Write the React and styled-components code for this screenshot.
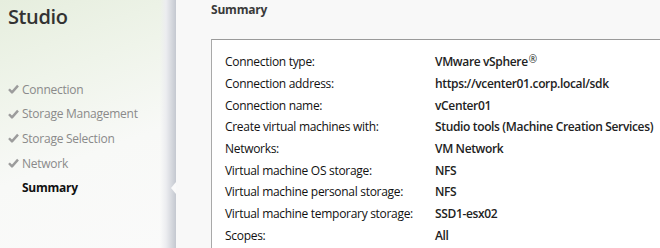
import React from "react";
import styled, { createGlobalStyle } from "styled-components";

const Global = createGlobalStyle`
  html, body { margin: 0; padding: 0; }
  body {
    width: 660px; height: 248px; overflow: hidden;
    font-family: "Open Sans", "Noto Sans", sans-serif;
  }
`;

const Page = styled.div`
  display: flex;
  width: 660px;
  height: 248px;
  overflow: hidden;
`;

const Sidebar = styled.aside`
  position: relative;
  width: 176px;
  flex: none;
  background:
    linear-gradient(90deg, rgba(255,255,255,0) 0, rgba(255,255,255,0) 160px, rgba(236,237,240,1) 166px, rgba(196,200,208,1) 176px),
    linear-gradient(160deg, #e6eede 0%, #eff4ea 30%, #f8f9f7 60%, #fafafa 100%);
`;

const Title = styled.h1`
  margin: 0;
  padding: 4px 0 0 8px;
  font-size: 20px;
  font-weight: 600;
  color: #333;
  letter-spacing: -0.4px;
  line-height: 26px;
`;

const Nav = styled.ul`
  list-style: none;
  margin: 47px 0 0 0;
  padding: 0;
`;

const NavItem = styled.li`
  position: relative;
  display: flex;
  align-items: center;
  height: 24.6px;
  padding-left: 8px;
  font-size: 12px;
  letter-spacing: -0.25px;
  color: ${(p) => (p.$active ? "#111" : "#8a8a8a")};
  font-weight: ${(p) => (p.$active ? 700 : 400)};
  ${(p) =>
    p.$active &&
    `&::after {
      content: "";
      position: absolute;
      right: 0;
      top: 50%;
      margin-top: -6px;
      border-top: 6px solid transparent;
      border-bottom: 6px solid transparent;
      border-right: 5px solid #fafafa;
    }`}
`;

const CheckSlot = styled.span`
  width: 14px;
  display: inline-flex;
  align-items: center;
`;

const Main = styled.main`
  flex: 1;
  padding-left: 35px;
  background: #f8f8f8;
  min-width: 0;
`;

const Heading = styled.h2`
  margin: 0;
  padding-top: 2px;
  font-size: 12px;
  font-weight: 700;
  color: #3a3a3a;
  letter-spacing: -0.2px;
  line-height: 16px;
`;

const Box = styled.div`
  margin-top: 21px;
  border: 1px solid #a9a9a9;
  border-top-color: #9a9a9a;
  border-right: none;
  background: #fff;
  padding: 11px 0 20px 13px;
  display: grid;
  grid-template-columns: 210px auto;
  grid-auto-rows: 21.7px;
  align-items: center;
  width: 600px;
`;

const Label = styled.div`
  font-size: 12px;
  color: #111;
  letter-spacing: -0.3px;
  white-space: nowrap;
`;

const Value = styled.div`
  font-size: 12px;
  font-weight: 600;
  color: #222;
  letter-spacing: -0.35px;
  white-space: nowrap;
`;

const Reg = styled.span`
  font-size: 10px;
  font-weight: 400;
  position: relative;
  top: -3px;
  margin-left: 1px;
`;

const Check = () => (
  <svg width="11" height="10" viewBox="0 0 11 10">
    <path d="M1 5.2 L4 8.4 L10 1.6" fill="none" stroke="#9c9c9c" strokeWidth="2.4" strokeLinejoin="round" />
  </svg>
);

const steps = [
  ["Connection", true],
  ["Storage Management", true],
  ["Storage Selection", true],
  ["Network", true],
  ["Summary", false],
];

const rows = [
  ["Connection type:", <>VMware vSphere<Reg>{"\u00ae"}</Reg></>],
  ["Connection address:", "https://vcenter01.corp.local/sdk"],
  ["Connection name:", "vCenter01"],
  ["Create virtual machines with:", "Studio tools (Machine Creation Services)"],
  ["Networks:", "VM Network"],
  ["Virtual machine OS storage:", "NFS"],
  ["Virtual machine personal storage:", "NFS"],
  ["Virtual machine temporary storage:", "SSD1-esx02"],
  ["Scopes:", "All"],
];

export default function App() {
  return (
    <>
      <Global />
      <Page>
        <Sidebar>
          <Title>Studio</Title>
          <Nav>
            {steps.map(([name, done]) => (
              <NavItem key={name} $active={!done}>
                <CheckSlot>{done && <Check />}</CheckSlot>
                {name}
              </NavItem>
            ))}
          </Nav>
        </Sidebar>
        <Main>
          <Heading>Summary</Heading>
          <Box>
            {rows.map(([l, v]) => (
              <React.Fragment key={l}>
                <Label>{l}</Label>
                <Value>{v}</Value>
              </React.Fragment>
            ))}
          </Box>
        </Main>
      </Page>
    </>
  );
}
